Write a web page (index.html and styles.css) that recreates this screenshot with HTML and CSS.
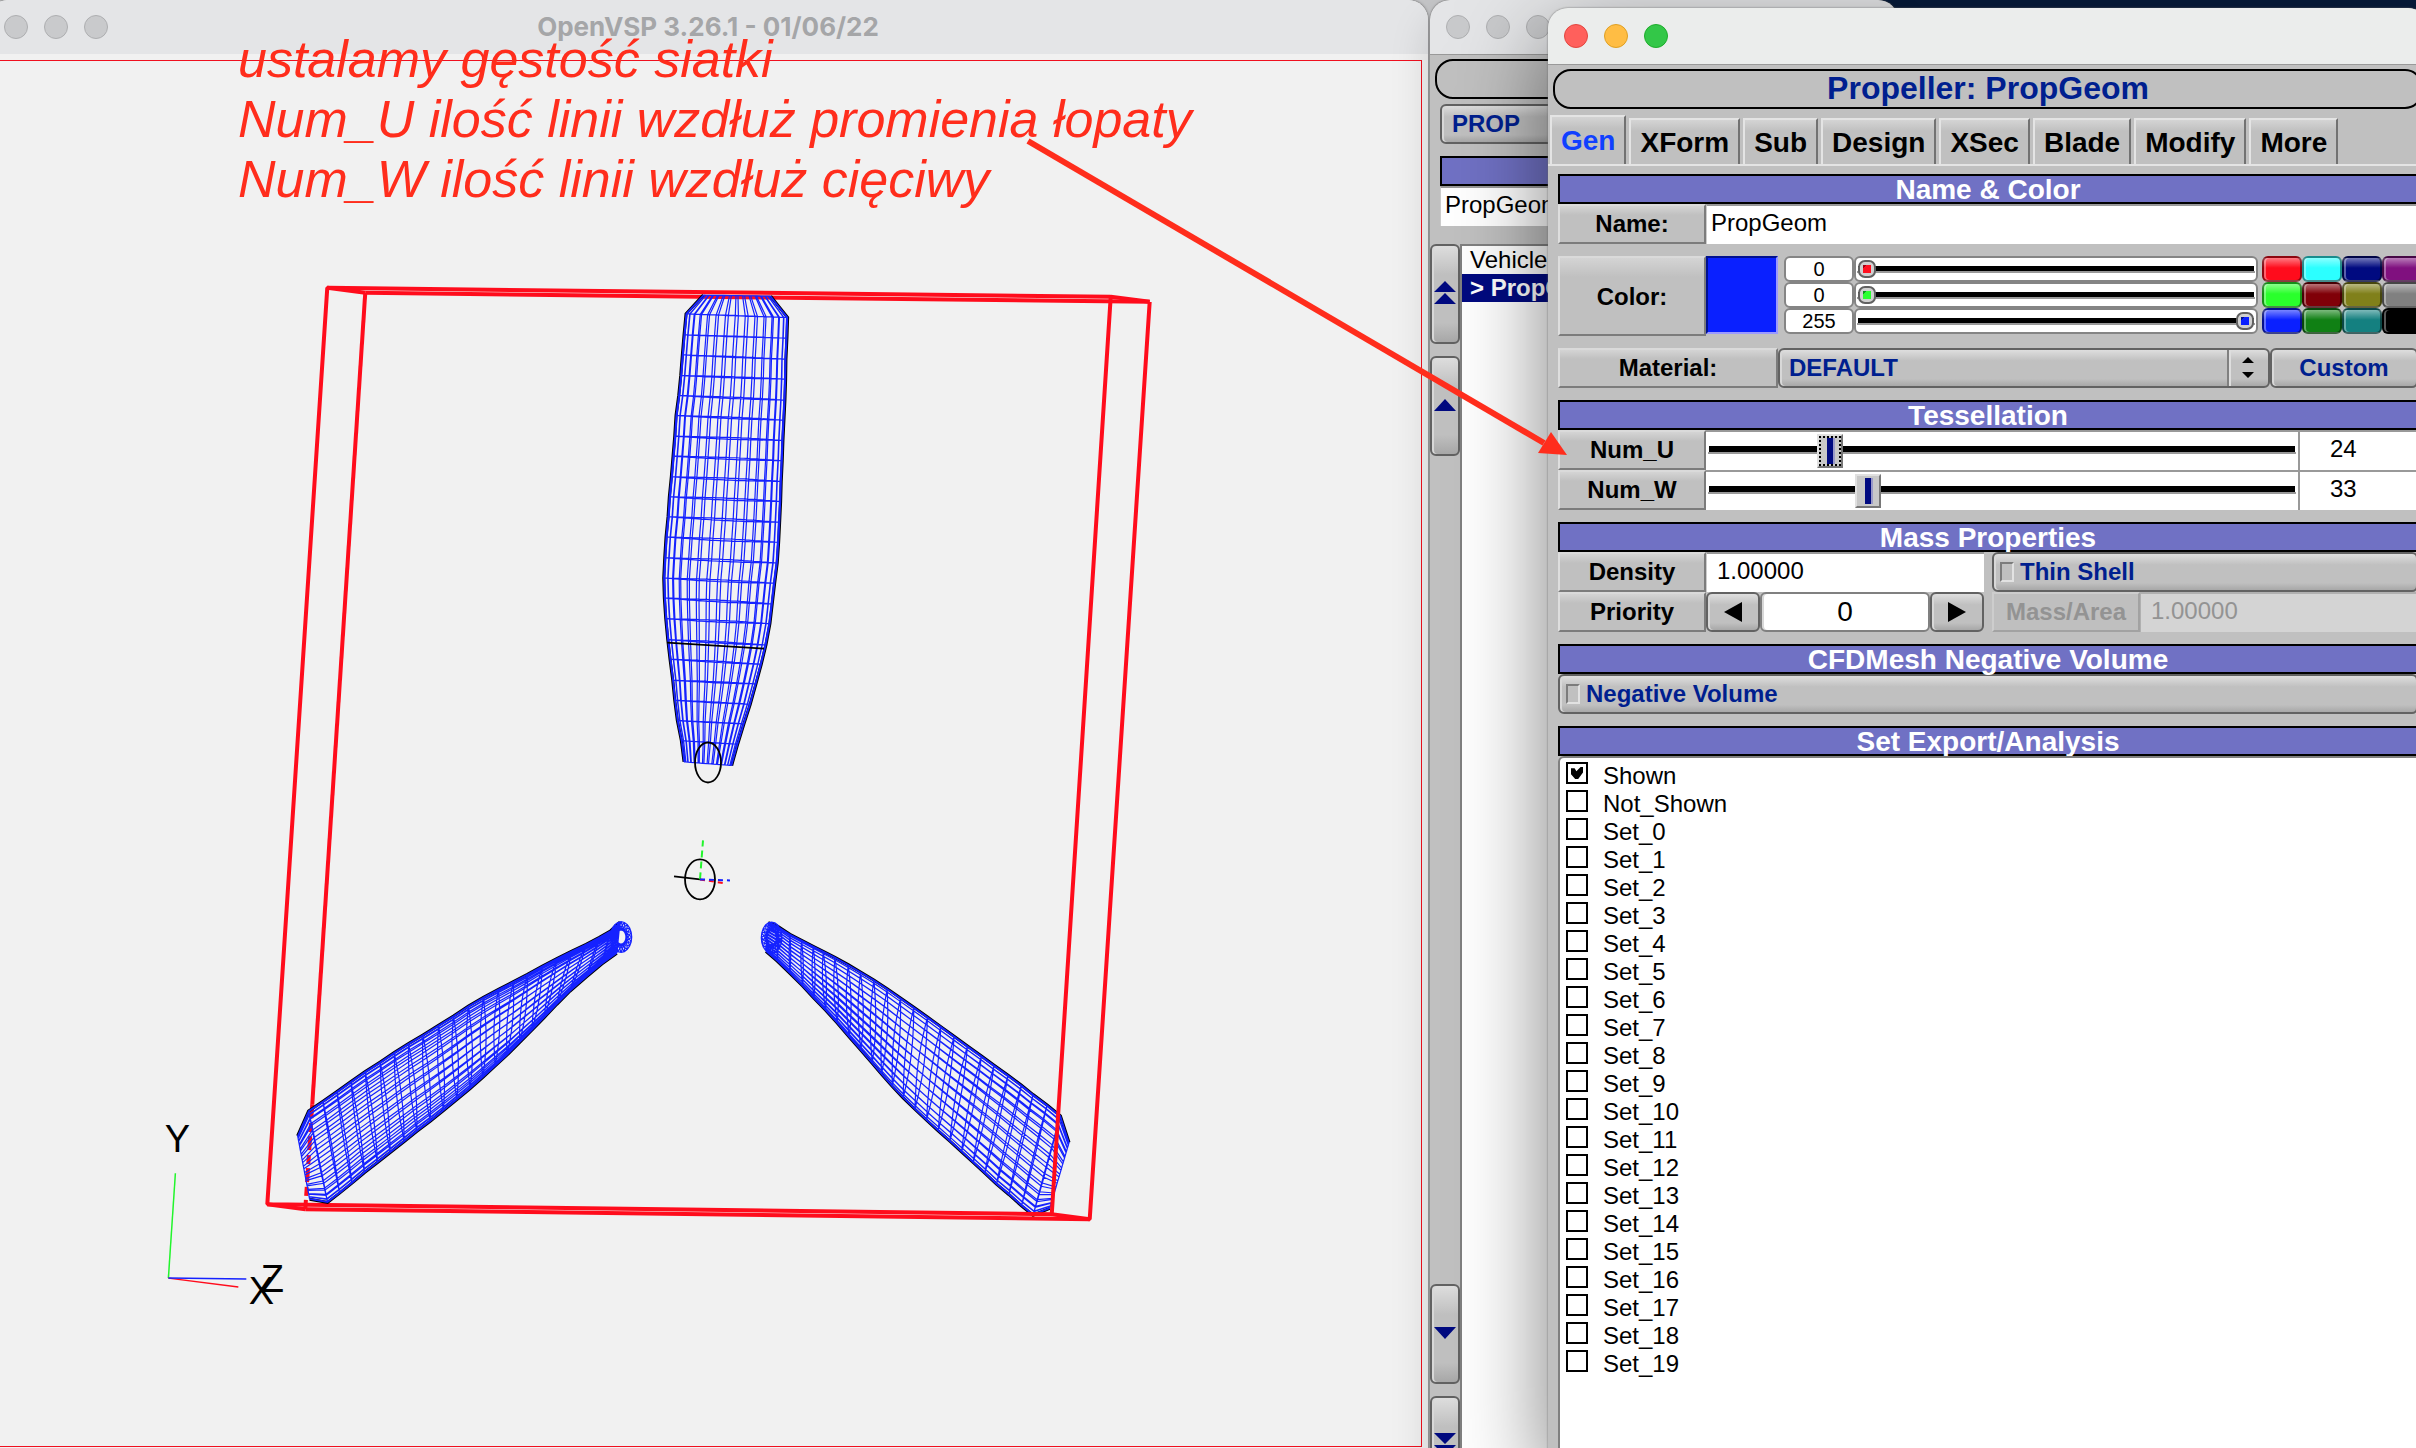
FILE: index.html
```html
<!DOCTYPE html>
<html lang="pl">

<head>
    <meta charset="UTF-8">
    <meta name="viewport" content="width=device-width, initial-scale=1.0">
    <title>OpenVSP 3.26.1</title>
    <link rel="stylesheet" href="styles.css">
    <script src="blades.js" defer></script>
</head>

<body>
    <div class="desktop">
        <div class="backdrop"></div>

        <!-- 3D view -->
        <section class="window view-window">
            <header class="titlebar">
                <div class="lights"><i></i><i></i><i></i></div>
                <h1 class="caption">OpenVSP 3.26.1 - 01/06/22</h1>
            </header>
            <div class="frame">
                <svg class="scene" viewBox="-5 61 1426 1386">
                    <g id="meshBack"></g>
                    <g class="box">
                        <path d="M327 288L1111 297L1052 1215L267 1205Z" />
                        <path d="M1150 302L365 293M1150 302L1090 1220L305 1210" />
                        <path d="M327 288L365 293M1111 297L1150 302M1052 1215L1090 1220M267 1205L305 1210" />
                        <path d="M365 293L312 1105" />
                        <path d="M312 1105L305 1210" stroke-dasharray="14 5 9 4" />
                    </g>
                    <g id="mesh"></g>
                    <g class="black">
                        <ellipse cx="708" cy="763" rx="13" ry="20" />
                        <ellipse cx="700" cy="880" rx="15" ry="20" />
                        <path d="M674 877L700 880" />
                        <path d="M667 643L764 649" />
                    </g>
                    <path class="axis green" d="M700 880L703 841" stroke-dasharray="7 4" />
                    <path class="axis red" d="M700 880L726 884" stroke-dasharray="5 4" />
                    <path class="axis blue" d="M700 880L730 881" stroke-dasharray="5 4" />
                    <path class="thin green" d="M168 1279L175 1174" />
                    <path class="thin red" d="M168 1279L238 1288" />
                    <path class="thin blue" d="M168 1279L246 1280" />
                    <text class="axis-name" x="177" y="1153">Y</text>
                    <text class="axis-name" x="261" y="1305">X</text>
                    <text class="axis-name" x="272" y="1293">Z</text>
                </svg>
            </div>
        </section>

        <!-- geometry browser -->
        <section class="window geom-window">
            <header class="titlebar">
                <div class="lights"><i></i><i></i><i></i></div>
            </header>
            <div class="pill"></div>
            <div class="geom-top">
                <select class="plastic drop" aria-label="Geom type">
                    <option>PROP</option>
                </select>
                <div class="heading"></div>
                <input class="field geom-name" type="text" value="PropGeom" aria-label="Active geom">
            </div>
            <div class="browser">
                <div class="movers">
                    <button class="plastic mover" aria-label="Top"><svg width="22" height="24"><path d="M11 0L22 11H0ZM11 12L22 23H0Z" /></svg></button>
                    <button class="plastic mover" aria-label="Up"><svg width="22" height="12"><path d="M11 0L22 12H0Z" /></svg></button>
                    <span class="spacer"></span>
                    <button class="plastic mover" aria-label="Down"><svg width="22" height="12"><path d="M0 0H22L11 12Z" /></svg></button>
                    <button class="plastic mover" aria-label="Bottom"><svg width="22" height="24"><path d="M0 0H22L11 11ZM0 12H22L11 23Z" /></svg></button>
                </div>
                <ul class="tree">
                    <li>Vehicle</li>
                    <li class="active">&gt; PropGeom</li>
                </ul>
            </div>
        </section>

        <!-- propeller editor -->
        <section class="window prop-window">
            <header class="titlebar">
                <div class="lights on"><i></i><i></i><i></i></div>
            </header>
            <h2 class="pill">Propeller: PropGeom</h2>
            <nav class="tabs">
                <button class="tab active">Gen</button>
                <button class="tab">XForm</button>
                <button class="tab">Sub</button>
                <button class="tab">Design</button>
                <button class="tab">XSec</button>
                <button class="tab">Blade</button>
                <button class="tab">Modify</button>
                <button class="tab">More</button>
            </nav>
            <div class="panel">
                <div class="group">
                    <h3 class="heading">Name &amp; Color</h3>
                    <div class="row">
                        <label class="label" for="name">Name:</label>
                        <input class="field grow name" id="name" type="text" value="PropGeom">
                    </div>
                </div>

                <div class="group row color-row">
                    <button class="label">Color:</button>
                    <div class="swatch"></div>
                    <div class="channels">
                        <input class="num" type="text" value="0" aria-label="Red">
                        <input class="chan r" type="range" min="0" max="255" value="0" aria-label="Red slider">
                        <input class="num" type="text" value="0" aria-label="Green">
                        <input class="chan g" type="range" min="0" max="255" value="0" aria-label="Green slider">
                        <input class="num" type="text" value="255" aria-label="Blue">
                        <input class="chan b" type="range" min="0" max="255" value="255" aria-label="Blue slider">
                    </div>
                    <div class="palette">
                        <button class="c-red" aria-label="Red"></button>
                        <button class="c-cyan" aria-label="Cyan"></button>
                        <button class="c-navy" aria-label="Navy"></button>
                        <button class="c-purple" aria-label="Purple"></button>
                        <button class="c-lime" aria-label="Lime"></button>
                        <button class="c-maroon" aria-label="Maroon"></button>
                        <button class="c-olive" aria-label="Olive"></button>
                        <button class="c-gray" aria-label="Gray"></button>
                        <button class="c-blue" aria-label="Blue"></button>
                        <button class="c-green" aria-label="Green"></button>
                        <button class="c-teal" aria-label="Teal"></button>
                        <button class="c-black" aria-label="Black"></button>
                    </div>
                </div>

                <div class="group row">
                    <label class="label wide" for="material">Material:</label>
                    <div class="combo">
                        <select class="plastic drop" id="material">
                            <option>DEFAULT</option>
                        </select>
                        <svg class="updown" width="44" height="36"><path class="l1" d="M2 0V36" /><path class="l2" d="M4 0V36" /><path d="M16 13L22 7L28 13ZM16 22H28L22 28Z" /></svg>
                    </div>
                    <button class="plastic custom">Custom</button>
                </div>

                <div class="group">
                    <h3 class="heading">Tessellation</h3>
                    <div class="row">
                        <label class="label" for="numU">Num_U</label>
                        <input class="slide focus" id="numU" type="range" min="0" max="122" value="24">
                        <input class="field count" type="text" value="24" aria-label="Num_U value">
                    </div>
                    <div class="row">
                        <label class="label" for="numW">Num_W</label>
                        <input class="slide" id="numW" type="range" min="0" max="125" value="33">
                        <input class="field count" type="text" value="33" aria-label="Num_W value">
                    </div>
                </div>

                <div class="group">
                    <h3 class="heading">Mass Properties</h3>
                    <div class="halves">
                        <div class="row">
                            <label class="label" for="density">Density</label>
                            <input class="field grow" id="density" type="text" value="1.00000">
                        </div>
                        <label class="plastic toggle"><input type="checkbox">Thin Shell</label>
                        <div class="row">
                            <label class="label" for="priority">Priority</label>
                            <button class="plastic step" aria-label="Less"><svg width="18" height="20"><path d="M18 0V20L0 10Z" /></svg></button>
                            <input class="plastic priority" id="priority" type="text" value="0">
                            <button class="plastic step" aria-label="More"><svg width="18" height="20"><path d="M0 0V20L18 10Z" /></svg></button>
                        </div>
                        <div class="row off">
                            <label class="label" for="massArea">Mass/Area</label>
                            <input class="field grow" id="massArea" type="text" value="1.00000" disabled>
                        </div>
                    </div>
                </div>

                <div class="group">
                    <h3 class="heading">CFDMesh Negative Volume</h3>
                    <label class="plastic toggle"><input type="checkbox">Negative Volume</label>
                </div>

                <h3 class="heading">Set Export/Analysis</h3>
                <div class="sets">
                    <label><input type="checkbox" checked>Shown</label>
                    <label><input type="checkbox">Not_Shown</label>
                    <label><input type="checkbox">Set_0</label>
                    <label><input type="checkbox">Set_1</label>
                    <label><input type="checkbox">Set_2</label>
                    <label><input type="checkbox">Set_3</label>
                    <label><input type="checkbox">Set_4</label>
                    <label><input type="checkbox">Set_5</label>
                    <label><input type="checkbox">Set_6</label>
                    <label><input type="checkbox">Set_7</label>
                    <label><input type="checkbox">Set_8</label>
                    <label><input type="checkbox">Set_9</label>
                    <label><input type="checkbox">Set_10</label>
                    <label><input type="checkbox">Set_11</label>
                    <label><input type="checkbox">Set_12</label>
                    <label><input type="checkbox">Set_13</label>
                    <label><input type="checkbox">Set_14</label>
                    <label><input type="checkbox">Set_15</label>
                    <label><input type="checkbox">Set_16</label>
                    <label><input type="checkbox">Set_17</label>
                    <label><input type="checkbox">Set_18</label>
                    <label><input type="checkbox">Set_19</label>
                </div>
            </div>
        </section>

        <!-- annotation -->
        <p class="note">ustalamy gęstość siatki<br>Num_U ilość linii wzdłuż promienia łopaty<br>Num_W ilość linii wzdłuż cięciwy</p>
        <svg class="arrow" width="560" height="340"><path class="shaft" d="M8 11L524 313" /><path d="M547 325L518 323L531 302Z" /></svg>
    </div>
</body>

</html>
```
FILE: styles.css
```css
* {
    box-sizing: border-box;
    margin: 0;
    padding: 0;
}

body {
    font: 24px/28px "Liberation Sans", Arial, sans-serif;
    color: #000;
    overflow: hidden;
}

input,
select,
button {
    font: inherit;
    color: inherit;
    border: none;
    outline: none;
    border-radius: 0;
    appearance: none;
    min-width: 0;
}

.desktop {
    position: relative;
    height: 100vh;
    overflow: hidden;
    background: #061b3b;
}

.backdrop {
    position: absolute;
    left: 0;
    right: 960px;
    top: 0;
    bottom: 0;
    background: #c4c5c7;
}

/* windows */
.window {
    position: absolute;
    display: flex;
    flex-direction: column;
    border-radius: 20px 20px 0 0;
    background: #c0c0c0;
}

.view-window {
    left: -12px;
    right: 988px;
    top: 0;
    bottom: -5px;
    background: #f1f1f1;
    box-shadow: 0 0 3px #555;
}

.geom-window {
    left: calc(100% - 986px);
    width: 468px;
    top: 0;
    bottom: -60px;
    box-shadow: 0 0 2px #555, 0 20px 40px rgba(0, 0, 0, 0.15);
    overflow: hidden;
}

.prop-window {
    left: calc(100% - 868px);
    right: -12px;
    top: 8px;
    bottom: -10px;
    box-shadow: 0 0 2px #666, 0 30px 90px rgba(0, 0, 0, 0.5);
}

.titlebar {
    display: grid;
    grid-template-columns: 1fr auto 1fr;
    align-items: center;
    flex: none;
    height: 54px;
    padding: 0 16px;
    background: #e4e5e7;
    border-radius: 20px 20px 0 0;
}

.geom-window .titlebar {
    height: 55px;
    border-bottom: 1px solid #999;
}

.prop-window .titlebar {
    height: 57px;
    background: #ebedec;
    border-bottom: 1px solid #999;
}

.caption {
    font: bold 26px/50px Inter, sans-serif;
    color: #a5a6a8;
}

.lights {
    display: flex;
    gap: 16px;
}

.lights i {
    width: 24px;
    height: 24px;
    border-radius: 50%;
    background: #c9cacc;
    border: 1px solid #aeafb1;
}

.lights.on i {
    background: #ff605c;
    border-color: #e2463f;
}

.lights.on i:nth-child(2) {
    background: #ffbd44;
    border-color: #dfa023;
}

.lights.on i:nth-child(3) {
    background: #33c748;
    border-color: #1dad2b;
}

/* 3D view */
.frame {
    flex: 1;
    min-height: 0;
    margin: 6px;
    border: 1px solid #f0101f;
}

.scene {
    display: block;
    width: 100%;
    height: 100%;
}

.scene path,
.scene ellipse {
    fill: none;
}

.box path {
    stroke: #ff0c1c;
    stroke-width: 4;
    stroke-linejoin: bevel;
}

.mesh-line {
    stroke: #1522ff;
    stroke-width: 1.2;
}

.mesh-edge {
    stroke: #000;
    stroke-width: 3;
}

.black {
    stroke: #000;
    stroke-width: 1.8;
}

.axis {
    stroke-width: 2;
}

.thin {
    stroke-width: 1.5;
}

.green {
    stroke: #22f52c;
}

.red {
    stroke: #ff0c1c;
}

.blue {
    stroke: #1522ff;
}

.axis-name {
    font: 38px "Liberation Sans", Arial, sans-serif;
    text-anchor: middle;
}

/* common widgets */
.pill {
    flex: none;
    height: 40px;
    margin: 4px 5px 0;
    border: 2px solid #000;
    border-radius: 18px;
    font: bold 32px/34px "Liberation Sans", Arial, sans-serif;
    text-align: center;
    color: #001f8f;
}

.heading {
    height: 30px;
    border: 2px solid #000;
    background: #7071c4;
    color: #fff;
    font: bold 28px/28px "Liberation Sans", Arial, sans-serif;
    text-align: center;
}

.plastic {
    height: 40px;
    border: 2px solid #626262;
    border-radius: 6px;
    background: linear-gradient(#dedede, #c0c0c0 30%, #c0c0c0 80%, #a8a8a8);
    box-shadow: inset 2px 0 #d8d8d8;
    color: #001f8f;
    font-weight: bold;
}

.drop {
    width: 100%;
    padding: 0 10px;
}

.row {
    display: flex;
    height: 40px;
}

.label {
    flex: none;
    width: 148px;
    border: 2px solid;
    border-color: #dadada #7c7c7c #7c7c7c #dedede;
    background: linear-gradient(#d4d4d4, #c0c0c0 25%);
    font-weight: bold;
    line-height: 35px;
    text-align: center;
}

.label.wide {
    width: 220px;
}

.field {
    height: 40px;
    padding: 0 10px 4px;
    border-top: 2px solid #999;
    border-left: 1px solid #ccc;
    background: #fff;
}

.grow {
    flex: 1;
}

.field.name {
    padding-left: 4px;
}

/* geometry browser */
.geom-top {
    padding: 5px 10px 0;
}

.geom-top .heading {
    margin-top: 12px;
}

.geom-name {
    width: 100%;
    padding-left: 4px;
}

.browser {
    display: flex;
    flex: 1;
    margin-top: 18px;
}

.movers {
    display: flex;
    flex-direction: column;
    gap: 12px;
    width: 30px;
    padding-bottom: 12px;
}

.mover {
    height: 100px;
    padding-bottom: 2px;
    display: grid;
    place-items: center;
}

.mover path {
    fill: #000a80;
}

.spacer {
    flex: 1;
}

.tree {
    flex: 1;
    border: 2px solid #808080;
    background: #fff;
    list-style: none;
}

.tree li {
    padding-left: 8px;
}

.tree .active {
    background: #000a80;
    color: #fff;
    font-weight: bold;
}

/* tabs */
.tabs {
    display: flex;
    align-items: flex-end;
    gap: 3px;
    height: 55px;
    padding-left: 2px;
    flex: none;
}

.tab {
    height: 46px;
    padding: 0 9px;
    border: 2px solid;
    border-color: #e4e4e4 #727272 #c0c0c0 #e4e4e4;
    border-bottom: none;
    background: linear-gradient(#d4d4d4, #c0c0c0 25%);
    font: bold 28px/46px "Liberation Sans", Arial, sans-serif;
}

.tab.active {
    height: 49px;
    color: #1040ff;
    line-height: 44px;
}

.panel {
    display: flex;
    flex-direction: column;
    flex: 1;
    padding: 8px 10px 0;
    border-top: 2px solid #e4e4e4;
}

.group {
    margin-bottom: 12px;
}

/* colour */
.color-row {
    height: 80px;
}

.swatch {
    width: 72px;
    height: 78px;
    border: 2px solid #001090;
    border-color: #001090 #9a9aff #9a9aff #001090;
    background: #0a20ff;
}

.channels {
    flex: 1;
    display: grid;
    grid-template-columns: 70px 1fr;
    grid-auto-rows: 26px;
    padding: 0 4px 0 6px;
}

.num,
.chan {
    width: 100%;
    height: 26px;
    border: 2px solid #858585;
    border-radius: 6px;
    background: #fff;
    font-size: 20px;
    text-align: center;
}

.chan {
    padding: 0 2px;
    background: linear-gradient(#000, #000) center 8px / calc(100% - 4px) 5px no-repeat,
        linear-gradient(#999, #999) center 13px / calc(100% - 2px) 2px no-repeat, #fff;
}

.chan::-webkit-slider-thumb {
    appearance: none;
    width: 18px;
    height: 18px;
    border: 2px solid #606060;
    border-radius: 7px;
    background: var(--dot) center / 8px 8px no-repeat, #d0d0d0;
}

.chan.r {
    --dot: linear-gradient(135deg, #a00010 25%, #ff1020 25%);
}

.chan.g {
    --dot: linear-gradient(135deg, #109020 25%, #2cff30 25%);
}

.chan.b {
    --dot: linear-gradient(135deg, #001090 25%, #0a20ff 25%);
}

.palette {
    display: grid;
    grid-template-columns: repeat(4, 40px);
    grid-auto-rows: 26px;
    flex: none;
    width: 156px;
}

.palette button {
    border: 2px solid rgba(0, 0, 0, 0.45);
    border-radius: 6px;
    background-image: linear-gradient(rgba(255, 255, 255, 0.45), rgba(255, 255, 255, 0) 45%);
    box-shadow: inset 2px 0 rgba(255, 255, 255, 0.35);
}

.palette .c-red { background-color: #ff0c1c; }
.palette .c-cyan { background-color: #2cffff; }
.palette .c-navy { background-color: #000a80; }
.palette .c-purple { background-color: #80107f; }
.palette .c-lime { background-color: #2aff2c; }
.palette .c-maroon { background-color: #800008; }
.palette .c-olive { background-color: #80801a; }
.palette .c-gray { background-color: #808080; }
.palette .c-blue { background-color: #0a20ff; }
.palette .c-green { background-color: #108014; }
.palette .c-teal { background-color: #148080; }
.palette .c-black { background: #000; }

.combo {
    position: relative;
    flex: 1;
}

.combo .drop {
    padding: 0 9px;
}

/* arrows lie over the native select */
.updown {
    position: absolute;
    right: 0;
    top: 2px;
    pointer-events: none;
}

.updown .l1 {
    stroke: #808080;
    stroke-width: 2;
}

.updown .l2 {
    stroke: #dedede;
    stroke-width: 2;
}

.custom {
    flex: none;
    width: 148px;
}

/* sliders */
.slide {
    flex: 1;
    height: 40px;
    border-top: 2px solid #999;
    background: linear-gradient(#000, #000) center 14px / calc(100% - 6px) 6px no-repeat,
        linear-gradient(#999, #999) center 20px / calc(100% - 4px) 2px no-repeat, #fff;
}

.slide::-webkit-slider-thumb {
    appearance: none;
    width: 26px;
    height: 34px;
    border: 2px solid;
    border-color: #e0e0e0 #777 #777 #e0e0e0;
    background: linear-gradient(#000a80, #000a80) 8px center / 6px 26px no-repeat,
        linear-gradient(#9a9ac8, #9a9ac8) 14px center / 2px 26px no-repeat, #c8c8c8;
}

.slide.focus::-webkit-slider-thumb {
    outline: 2px dotted #000;
    outline-offset: -4px;
}

.count {
    flex: none;
    width: 120px;
    padding-left: 30px;
    border-left: 2px solid #999;
}

/* mass properties */
.halves {
    display: grid;
    grid-template-columns: minmax(0, 1fr) minmax(0, 1fr);
    column-gap: 8px;
}

.step {
    flex: none;
    width: 54px;
    display: grid;
    place-items: center;
}

.priority {
    flex: 1;
    background: #fff;
    border-color: #808080;
    color: #000;
    font-size: 28px;
    font-weight: normal;
    text-align: center;
}

.toggle {
    display: flex;
    align-items: center;
    gap: 6px;
    padding-left: 6px;
}

.toggle input {
    width: 14px;
    height: 20px;
    border: 2px solid;
    border-color: #7c7c7c #e2e2e2 #e2e2e2 #7c7c7c;
}

.off .label {
    border-color: #cdcdcd #a2a2a2 #a2a2a2 #cdcdcd;
    background: #bfbfbf;
    color: #939393;
}

.off .field {
    border-color: #b0b0b0;
    background: #d4d4d4;
    color: #939393;
}

/* set list */
.sets {
    flex: 1;
    padding: 4px 6px;
    border: 2px solid #808080;
    border-top-left-radius: 6px;
    background: #fff;
}

.sets label {
    display: flex;
    align-items: center;
    gap: 15px;
    height: 28px;
}

.sets input {
    width: 22px;
    height: 22px;
    margin-bottom: 6px;
    border: 2px solid #000;
    display: grid;
    place-items: center;
}

.sets input:checked::before {
    content: "";
    width: 12px;
    height: 12px;
    background: #000;
    clip-path: polygon(0 10%, 30% 10%, 45% 35%, 80% 0, 100% 0, 100% 45%, 60% 100%, 35% 100%, 0 60%);
}

/* annotation, over the windows */
.note {
    position: absolute;
    left: 238px;
    top: 29px;
    font: italic 52px/60px "Liberation Sans", Arial, sans-serif;
    color: #ff2d1c;
    white-space: nowrap;
}

.arrow {
    position: absolute;
    left: 1020px;
    top: 130px;
    fill: #ff2d1c;
    pointer-events: none;
}

.arrow .shaft {
    stroke: #ff2d1c;
    stroke-width: 6;
}
```
FILE: blades.js
```js
// Wireframe blades. Every station is [x1, y1, x2, y2]: leading edge, trailing edge,
// in thirds of a pixel from the blade's origin. The first station is the tip.
var blades = [
    {
        ox: 620, oy: 270, bow: 3, skew: 0.03, layer: "mesh",
        st: [
            [250, 76, 452, 79], [198, 132, 503, 143], [192, 195, 501, 205], [187, 255, 498, 268],
            [182, 317, 497, 328], [176, 377, 495, 391], [168, 437, 492, 451], [164, 499, 489, 512],
            [159, 559, 487, 573], [154, 621, 484, 635], [148, 681, 482, 695], [144, 741, 479, 758],
            [138, 802, 476, 818], [134, 864, 472, 880], [131, 925, 464, 941], [133, 985, 457, 1003],
            [137, 1047, 450, 1062], [143, 1110, 438, 1126], [150, 1169, 424, 1184], [158, 1232, 408, 1243],
            [164, 1292, 391, 1304], [172, 1353, 372, 1363], [184, 1413, 353, 1424], [192, 1477, 335, 1488]
        ]
    },
    {
        ox: 240, oy: 840, bow: 9, skew: 0.04, layer: "mesh", root: [1143, 293, 32, 46],
        st: [
            [172, 890, 208, 1080], [205, 815, 262, 1090], [248, 786, 298, 1062], [290, 757, 335, 1032],
            [332, 727, 373, 1000], [375, 697, 412, 970], [420, 668, 450, 940], [462, 640, 492, 907],
            [505, 613, 530, 876], [548, 587, 570, 846], [595, 558, 610, 814], [640, 530, 650, 781],
            [685, 500, 690, 748], [730, 474, 728, 714], [775, 450, 765, 680], [820, 427, 800, 648],
            [862, 405, 838, 610], [907, 380, 875, 573], [950, 358, 912, 535], [995, 335, 950, 495],
            [1038, 315, 990, 455], [1078, 294, 1040, 412], [1112, 274, 1085, 374], [1140, 248, 1130, 342]
        ]
    },
    {
        ox: 640, oy: 820, bow: 9, skew: 0.04, layer: "meshBack", root: [395, 355, 31, 47],
        st: [
            [1288, 970, 1230, 1168], [1262, 890, 1180, 1188], [1222, 857, 1145, 1160], [1180, 826, 1107, 1126],
            [1145, 798, 1070, 1095], [1105, 768, 1035, 1062], [1063, 738, 1000, 1030], [1025, 710, 965, 998],
            [983, 680, 930, 966], [943, 651, 895, 935], [903, 622, 860, 903], [863, 593, 825, 870],
            [822, 564, 790, 836], [782, 536, 757, 801], [742, 508, 725, 765], [702, 482, 697, 732],
            [662, 458, 663, 693], [625, 436, 628, 653], [585, 414, 592, 611], [550, 396, 557, 573],
            [520, 381, 522, 537], [485, 363, 488, 500], [450, 345, 450, 462], [415, 322, 412, 425],
            [385, 310, 378, 396]
        ]
    }
];

var STEPS = 16;

// point on a station; side is 1 for the upper surface and -1 for the lower one
function pointAt(b, k, i, side) {
    var s = b.st[k];
    var t = (1 - Math.cos(Math.PI * i / STEPS)) / 2;
    var arch = Math.sin(Math.PI * t);
    var span = Math.sin(Math.PI * k / (b.st.length - 1));
    t += side * b.skew * arch / 2;
    var dx = s[2] - s[0];
    var dy = s[3] - s[1];
    var len = Math.sqrt(dx * dx + dy * dy);
    var bow = side * b.bow * arch * span;
    var x = s[0] + dx * t + bow * dy / len;
    var y = s[1] + dy * t - bow * dx / len;
    return (b.ox + x / 3).toFixed(1) + " " + (b.oy + y / 3).toFixed(1);
}

function addPath(layer, cls, d) {
    var p = document.createElementNS("http://www.w3.org/2000/svg", "path");
    p.setAttribute("class", cls);
    p.setAttribute("d", d);
    document.getElementById(layer).appendChild(p);
}

blades.forEach(function (b) {
    var d = "";
    var i, k, pts;
    // black edge under the mesh
    [0, STEPS].forEach(function (e) {
        pts = [];
        for (k = 0; k < b.st.length; k++) {
            pts.push(pointAt(b, k, e, 1));
        }
        addPath(b.layer, "mesh-edge", "M" + pts.join("L"));
    });
    [1, -1].forEach(function (side) {
        for (k = 0; k < b.st.length; k++) {
            pts = [];
            for (i = 0; i <= STEPS; i++) {
                pts.push(pointAt(b, k, i, side));
            }
            d += "M" + pts.join("L");
        }
        for (i = 0; i <= STEPS; i++) {
            pts = [];
            for (k = 0; k < b.st.length; k++) {
                pts.push(pointAt(b, k, i, side));
            }
            d += "M" + pts.join("L");
        }
    });
    // round root cap with its chords
    if (b.root) {
        var rim = [];
        for (i = 0; i <= 20; i++) {
            var a = i * Math.PI / 10;
            rim.push([b.ox + (b.root[0] + b.root[2] * Math.cos(a)) / 3, b.oy + (b.root[1] + b.root[3] * Math.sin(a)) / 3]);
        }
        d += "M" + rim.join("L");
        for (i = 0; i < 20; i++) {
            d += "M" + rim[i] + "L" + rim[(i + 7) % 20];
        }
    }
    addPath(b.layer, "mesh-line", d);
});
```
